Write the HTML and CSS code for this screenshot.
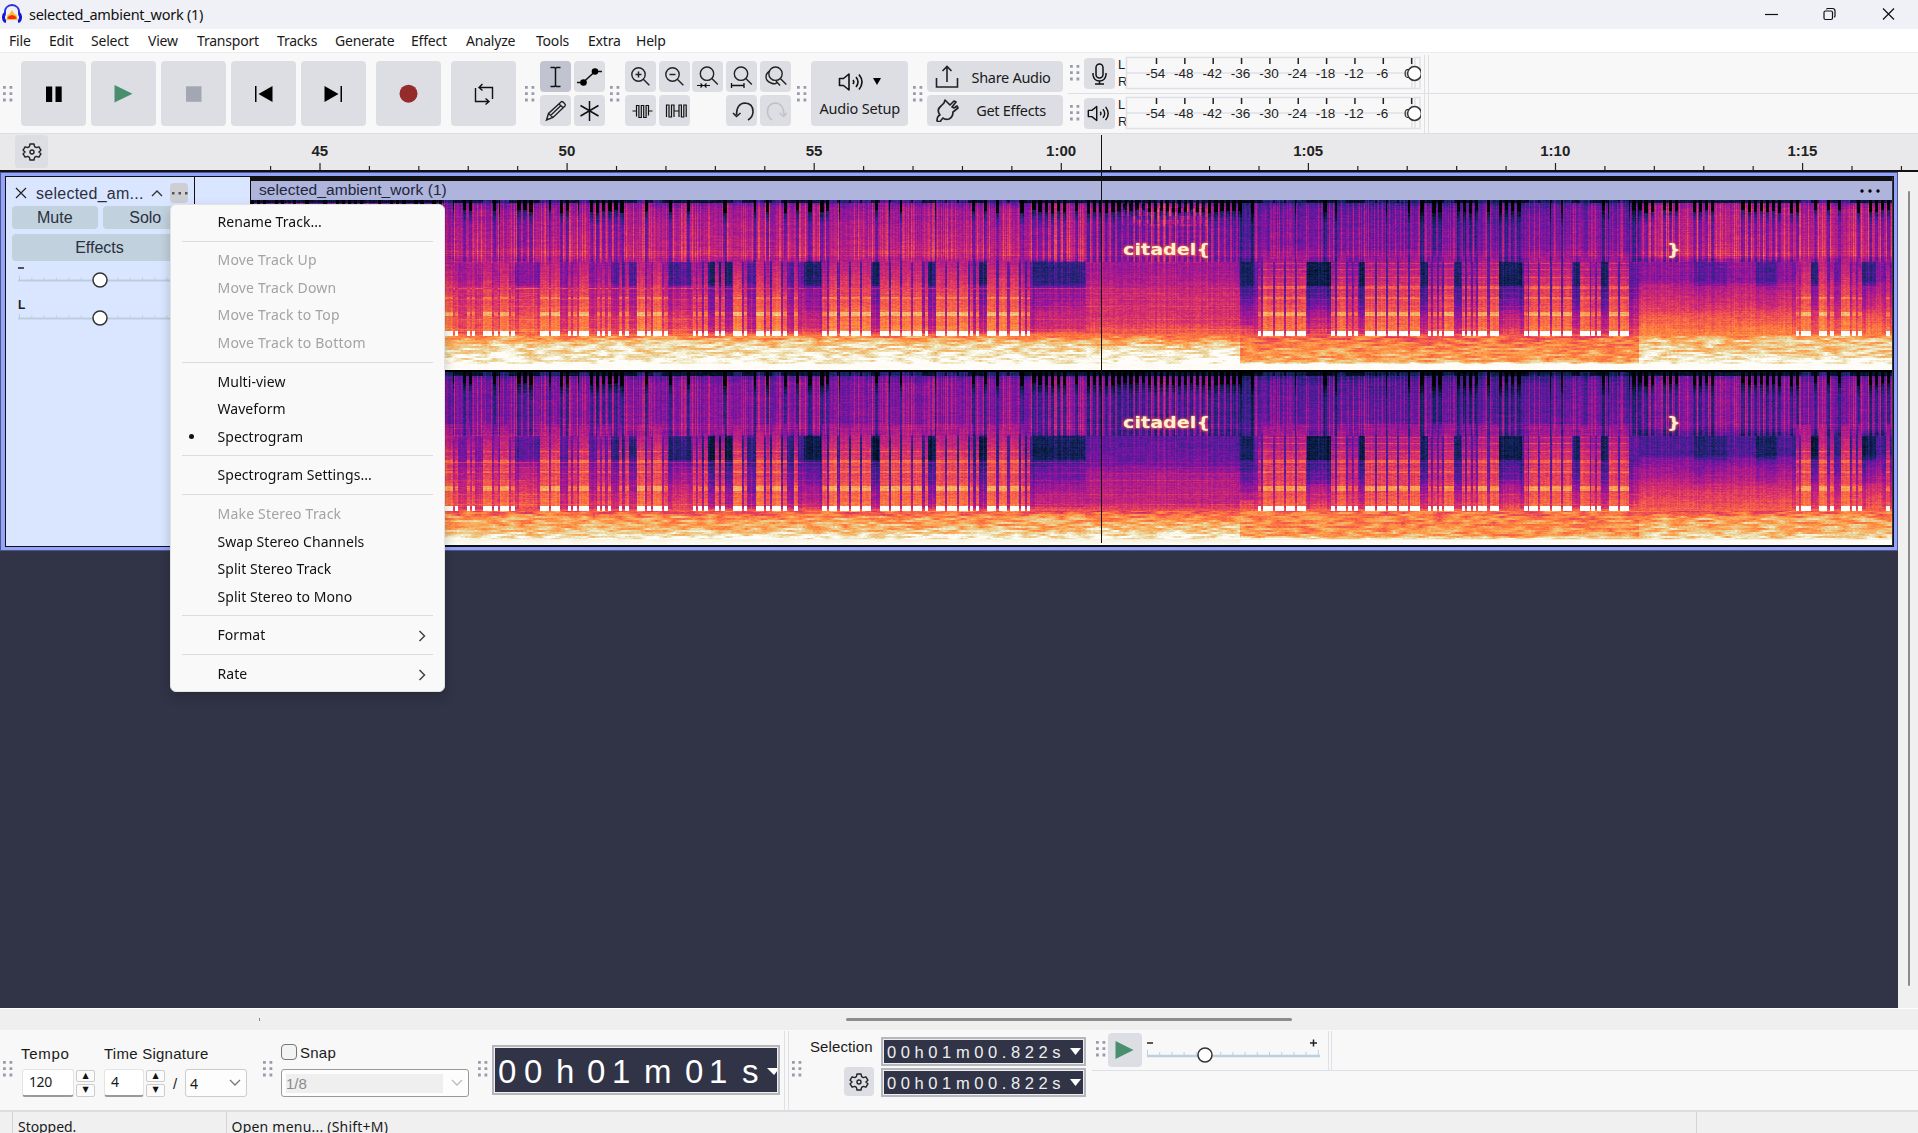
FILE: index.html
```
<!DOCTYPE html>
<html lang="en">
<head>
<meta charset="utf-8">
<title>selected_ambient_work (1)</title>
<link rel="stylesheet" href="styles.css">
</head>
<body>
<svg width="0" height="0" class="defs">
  <symbol id="grip" viewBox="0 0 10 16"><g fill="#9a9bad"><path d="M0 0h2.800v2.800H0zM6.500 0h2.800v2.800H6.500zM0 6.300h2.800v2.800H0zM6.500 6.300h2.800v2.800H6.500zM0 12.600h2.800v2.800H0zM6.500 12.600h2.800v2.800H6.500z"/></g></symbol>
  <symbol id="gear" viewBox="0 0 20 20"><g fill="none" stroke="#222" stroke-width="1.4" stroke-linejoin="round"><path d="M8 2h4l.6 2.6 1.7 1 2.6-.8 2 3.4-2 1.8 2 1.8-2 3.4-2.6-.8-1.7 1L12 18H8l-.6-2.6-1.7-1-2.6.8-2-3.4 2-1.8-2-1.8 2-3.4 2.6.8 1.7-1z"/><circle cx="10" cy="10" r="2"/></g></symbol>
  <symbol id="speaker" viewBox="0 0 26 20"><g fill="none" stroke="#111" stroke-width="1.6" stroke-linejoin="round"><path d="M1.5 6.5h4L11 2v16l-5.500-4.500h-4zM15 8q1.500 2 0 4M18 5q4 5 0 10M21 2.500q6 7.500 0 15"/></g></symbol>
  <symbol id="lens" viewBox="0 0 31 31"><g fill="none" stroke="#222" stroke-width="1.400"><circle cx="13.500" cy="13.500" r="6.700"/><path d="M18.300 18.300l6 6"/></g></symbol>
</svg>

<header class="titlebar">
  <svg class="logo" width="20" height="22" viewBox="0 0 20 22"><path d="M4.500 18l1-5 2-1 2.500-4 2.500 4 2 1 1 5z" fill="#fdbb30"/><path d="M5 16l2-2 3-1 3 1 2 2-2 1H7z" fill="#f22c10"/><path d="M3 12C1 0 19 0 17 12" fill="none" stroke="#2a30d8" stroke-width="1.800"/><path d="M3.500 11.500c-3 1-2.500 7.500.5 8M16.500 11.500c3 1 2.500 7.500-.5 8" fill="none" stroke="#1218d8" stroke-width="3"/></svg>
  <span class="title">selected_ambient_work (1)</span>
  <svg class="winctl" width="140" height="20" viewBox="0 0 140 20" fill="none" stroke="#111" stroke-width="1.200"><path d="M5 10.500h13"/><rect x="64" y="7" width="8.500" height="8.500" rx="1.500"/><path d="M66.500 5.500q0-1 1-1h5q2.500 0 2.500 2.500v5q0 1-1 1"/><path d="M123 4.500l11 11M134 4.500l-11 11"/></svg>
</header>

<nav class="menubar"><span>File</span><span>Edit</span><span>Select</span><span>View</span><span>Transport</span><span>Tracks</span><span>Generate</span><span>Effect</span><span>Analyze</span><span>Tools</span><span>Extra</span><span>Help</span></nav>

<section class="toolbar">
  <svg class="grip"><use href="#grip"/></svg>
  <div class="transport">
    <button><svg viewBox="0 0 65 65"><path d="M25 25.500h6.200v15.500H25zM34.500 25.500h6.200v15.500h-6.200z"/></svg></button>
    <button><svg viewBox="0 0 65 65"><path fill="#4a8f6d" d="M23.500 24v17.500l18-8.800z"/></svg></button>
    <button><svg viewBox="0 0 65 65"><path fill="#a3a7b1" d="M25 25.300h15.500v15.500H25z"/></svg></button>
    <button><svg viewBox="0 0 65 65"><path d="M24 25h1.500v16H24zM41.500 25v16L27.500 33z"/></svg></button>
    <button><svg viewBox="0 0 65 65"><path d="M23.500 25v16l14-8zM39.500 25H41v16h-1.500z"/></svg></button>
    <button class="gap"><svg viewBox="0 0 65 65"><circle cx="32.500" cy="32.700" r="9" fill="#952b2b"/></svg></button>
    <button class="gap"><svg viewBox="0 0 65 65" fill="none" stroke="#111" stroke-width="1.400"><path d="M24.500 27v13.500h13.500M41.500 38V26.500H28M31.500 23l-3.500 3.500 3.500 3M34.500 37.500l3.500 3-3.500 3"/></svg></button>
  </div>
  <svg class="grip"><use href="#grip"/></svg>
  <div class="tools two">
    <button class="on"><svg viewBox="0 0 31 31" fill="none" stroke="#111" stroke-width="1.500"><path d="M10.500 6.500h4l1 1 1-1h4M10.500 25.500h4l1-1 1 1h4M15.500 7v18"/></svg></button>
    <button><svg viewBox="0 0 31 31"><path d="M3 21.500h6L21 10.500h7" fill="none" stroke="#111" stroke-width="1.500"/><circle cx="9.500" cy="21.500" r="3.300"/><circle cx="21" cy="10.500" r="3.300"/></svg></button>
    <button><svg viewBox="0 0 31 31" fill="none" stroke="#222" stroke-width="1.400"><path d="M6.500 25l2-6.500L21 7q1-1 2.500.5l1 1q1.500 1.500.5 2.500L13 22.500zM8.500 18.500l4.500 4M19 9l4.500 4M10.500 20.500L20.500 11"/></svg></button>
    <button><svg viewBox="0 0 31 31" fill="none" stroke="#111" stroke-width="1.500"><path d="M15.500 6v20M6.500 10.500l18 10.500M24.500 10.500l-18 10.500"/></svg></button>
  </div>
  <svg class="grip"><use href="#grip"/></svg>
  <div class="tools five">
    <button><svg viewBox="0 0 31 31"><use href="#lens"/><path d="M10.500 13.500h6M13.500 10.500v6" stroke="#222" stroke-width="1.500"/></svg></button>
    <button><svg viewBox="0 0 31 31"><use href="#lens"/><path d="M10.500 13.500h6" stroke="#222" stroke-width="1.500"/></svg></button>
    <button><svg viewBox="0 0 31 31"><use href="#lens" x="1.500" y="-.8"/><path d="M5 24.500h13M8.500 22.500l2 2-2 2M14.500 22.500l-2 2 2 2" fill="none" stroke="#111" stroke-width="1.200"/></svg></button>
    <button><svg viewBox="0 0 31 31"><use href="#lens" x="1.500" y="-.8"/><path d="M5.500 24.500h12.500M5.500 22v5M18 22v5" fill="none" stroke="#111" stroke-width="1.300"/></svg></button>
    <button><svg viewBox="0 0 31 31"><use href="#lens" x="2" y="-.8"/><path d="M10 10q-4 2-4 6t5 6 6-1M16 20l4 4.500" fill="none" stroke="#222" stroke-width="1.400"/></svg></button>
    <button><svg viewBox="0 0 31 31" fill="none" stroke="#111" stroke-width="1.200"><path d="M7.500 16h4v5M23.500 11v5h4M11.500 21.500v-11h2.400v12h2.400v-12h2.400v12h2.400v-12h2.400v10"/></svg></button>
    <button><svg viewBox="0 0 31 31" fill="none" stroke="#111" stroke-width="1.200"><path d="M7.500 22V10h2.500v12h2.500V10h2.500v12M15 16h5M20 22V10h2.400v12h2.400V10h2.400v12"/></svg></button>
    <i></i>
    <button><svg viewBox="0 0 31 31" fill="none" stroke="#222" stroke-width="1.600"><path d="M22 25q5-3 5-8.500 0-8-8-8.500-8.500.5-8.500 12M7 18l3.500 3.500 4-3.500"/></svg></button>
    <button><svg viewBox="0 0 31 31" fill="none" stroke="#bfc3c8" stroke-width="1.600"><path d="M12 25q-4.500-3-4.500-8.500 0-8 8-8.500 8 .5 8.500 12M19.500 18l4 3.500 3.500-3.500"/></svg></button>
  </div>
  <svg class="grip"><use href="#grip"/></svg>
  <button class="setup"><span><svg width="26" height="20"><use href="#speaker"/></svg><svg width="8" height="7"><path d="M0 0h8L4 7z"/></svg></span><b>Audio Setup</b></button>
  <svg class="grip"><use href="#grip"/></svg>
  <div class="share">
    <button><svg width="24" height="24" viewBox="0 0 24 24" fill="none" stroke="#222" stroke-width="1.600"><path d="M1.500 13v9h21v-9M12 17V2M7.500 6L12 1.500 16.500 6"/></svg><b>Share Audio</b></button>
    <button><svg width="24" height="24" viewBox="0 0 24 24" fill="none" stroke="#222" stroke-width="1.700" stroke-linejoin="round"><path d="M2 23q0-5 3-6-4-5 1-9l3-3 1-3 3 3 2 2 4-4 2 1-4 5 2 1 3-2 1 2-5 4q0 5-4 7-4 1-6-1-2 2-3 4z"/></svg><b>Get Effects</b></button>
  </div>
  <div class="meters">
    <div class="meter"><svg class="grip"><use href="#grip"/></svg><button><svg viewBox="0 0 31 31" fill="none" stroke="#111" stroke-width="1.500"><rect x="12" y="6" width="7" height="14" rx="3.500"/><path d="M9 15v2q1 6 6.500 6t6.500-6v-2M15.500 23v3M11 26h9"/></svg></button><svg class="scale" width="303" height="36"></svg></div>
    <div class="meter"><svg class="grip"><use href="#grip"/></svg><button><svg viewBox="-3 -5.500 31 31"><use href="#speaker" width="23" height="20"/></svg></button><svg class="scale" width="303" height="36"></svg></div>
  </div>
</section>

<section class="ruler"><button><svg width="20" height="20"><use href="#gear"/></svg></button><svg class="timeline" width="1858" height="37"></svg></section>

<main class="workspace">
  <div class="canvas">
    <div class="track">
      <aside class="panel">
        <div class="name"><svg width="12" height="12" viewBox="0 0 12 12" stroke="#222" stroke-width="1.200"><path d="M1 1l10 10M11 1L1 11"/></svg><span>selected_am...</span><svg width="12" height="8" viewBox="0 0 12 8" fill="none" stroke="#333" stroke-width="1.400"><path d="M1 7l5-5 5 5"/></svg><em><svg width="16" height="3"><path d="M0 0h2.500v2.500H0zM6.500 0H9v2.500H6.500zM13 0h2.500v2.500H13z" fill="#555"/></svg></em></div>
        <div class="pair"><button>Mute</button><button>Solo</button></div>
        <button class="fx">Effects</button>
        <svg class="sliders" width="176" height="66"></svg>
      </aside>
      <div class="vruler"></div>
      <div class="clip">
        <div class="cliphead"><span>selected_ambient_work (1)</span><svg width="20" height="4"><circle cx="2" cy="2" r="1.700"/><circle cx="10" cy="2" r="1.700"/><circle cx="18" cy="2" r="1.700"/></svg></div>
        <div class="spectro">
          <canvas width="1642" height="345"></canvas>
          <span class="mark word top">citadel{</span><span class="mark word low">citadel{</span>
          <span class="mark brace top">}</span><span class="mark brace low">}</span>
        </div>
      </div>
    </div>
  </div>
  <div class="vscroll"><i></i></div>
  <div class="playhead"></div>
  <ul class="popup">
    <li>Rename Track...</li><li class="sep"></li>
    <li class="off">Move Track Up</li><li class="off">Move Track Down</li><li class="off">Move Track to Top</li><li class="off">Move Track to Bottom</li><li class="sep"></li>
    <li>Multi-view</li><li>Waveform</li><li class="dot">Spectrogram</li><li class="sep"></li>
    <li>Spectrogram Settings...</li><li class="sep"></li>
    <li class="off">Make Stereo Track</li><li>Swap Stereo Channels</li><li>Split Stereo Track</li><li>Split Stereo to Mono</li><li class="sep"></li>
    <li>Format<svg width="8" height="12" viewBox="0 0 8 12"><path d="M1.500 1L6.500 6l-5 5"/></svg></li><li class="sep"></li>
    <li>Rate<svg width="8" height="12" viewBox="0 0 8 12"><path d="M1.500 1L6.500 6l-5 5"/></svg></li>
  </ul>
</main>

<div class="hscroll"><i class="speck"></i><i class="thumb"></i></div>

<footer class="bottom">
  <svg class="grip"><use href="#grip"/></svg>
  <div class="group tempo"><label>Tempo</label><div class="row"><span class="field w52">120</span><span class="spin"><i>▲</i><i>▼</i></span></div></div>
  <div class="group sig"><label>Time Signature</label><div class="row"><span class="field w40">4</span><span class="spin"><i>▲</i><i>▼</i></span><span class="slash">/</span><span class="select">4<svg width="12" height="8" viewBox="0 0 12 8"><path d="M1 1l5 5 5-5"/></svg></span></div></div>
  <svg class="grip g3"><use href="#grip"/></svg>
  <div class="group snap"><label><i></i>Snap</label><span class="select dis"><span>1/8</span><svg width="12" height="8" viewBox="0 0 12 8"><path d="M1 1l5 5 5-5"/></svg></span></div>
  <svg class="grip g4"><use href="#grip"/></svg>
  <div class="bigtime"><svg width="282" height="45"><g font-family="Liberation Sans, sans-serif" font-size="33" fill="#fff"><text x="2" y="36">0</text><text x="28" y="36">0</text><text x="60" y="36">h</text><text x="91" y="36">0</text><text x="116" y="36">1</text><text x="148" y="36">m</text><text x="189" y="36">0</text><text x="213" y="36">1</text><text x="246" y="36">s</text></g><path d="M271 21h11v2l-4 5z" fill="#fff"/></svg></div>
  <div class="vline"></div>
  <svg class="grip g5"><use href="#grip"/></svg>
  <div class="selection"><div class="sel-left"><span>Selection</span><button><svg width="20" height="20"><use href="#gear"/></svg></button></div>
    <div class="times"><div class="smalltime"><span>00h01m00.822s</span><svg width="11" height="7"><path d="M0 0h11L5.500 7z" fill="#fff"/></svg></div><div class="smalltime"><span>00h01m00.822s</span><svg width="11" height="7"><path d="M0 0h11L5.500 7z" fill="#fff"/></svg></div></div></div>
  <div class="speedbar"><div class="speed">
    <svg class="grip"><use href="#grip"/></svg>
    <button><svg viewBox="0 0 34 34"><path d="M7.500 8v18l18-9z" fill="#4a8f6d"/></svg></button>
    <svg class="speed-slider" width="185" height="38"></svg>
    <div class="vline short"></div>
  </div></div>
</footer>
<div class="status"><span>Stopped.</span><span>Open menu... (Shift+M)</span><span></span></div>
<script src="script.js"></script>
</body>
</html>
```
FILE: styles.css
```
* { box-sizing: border-box; }
body { margin: 0; width: 1918px; height: 1133px; overflow: hidden; display: flex; flex-direction: column; background: #f0f0f0; font-family: "Noto Sans", "Open Sans", sans-serif; color: #1a1a1a; }
button { border: 0; padding: 0; margin: 0; background: #dddee4; border-radius: 4px; color: inherit; font: inherit; display: block; }
button svg { display: block; }
b { font-weight: 400; }
.defs { position: absolute; }
.titlebar { height: 29px; flex: none; background: #f0f1f7; display: flex; align-items: center; padding: 0 24px 0 2px; }
.logo { margin-top: -4px; }
.title { margin-left: 7px; margin-top: -1px; font-size: 14.500px; letter-spacing: -.260px; color: #111; }
.winctl { margin-left: auto; margin-right: -6px; margin-top: -1px; }
.menubar { height: 23px; flex: none; background: #fff; display: grid; grid-template-columns: 40px 42px 57px 49px 80px 58px 76px 55px 70px 52px 48px 60px; padding-left: 9px; line-height: 24px; font-size: 14px; letter-spacing: -.200px; }
.toolbar { height: 82px; flex: none; background: #f8f8f9; border-top: 1px solid #ececef; border-bottom: 1px solid #dddde5; display: flex; align-items: center; padding: 1px 0 0 3px; }
.grip { width: 10px; height: 16px; flex: none; }
.transport { display: flex; gap: 5px; margin: 0 9px 0 8px; }
.transport button { width: 65px; height: 65px; }
.transport .gap { margin-left: 5px; }
.tools { display: grid; gap: 2.600px; margin: 0 5px; }
.tools button, .meter button { width: 31px; height: 31px; }
.two { grid-template-columns: 31px 31px; }
.two .on { background: #c1c3d0; }
.five { grid-template-columns: repeat(5, 31px); gap: 2.700px; margin: 0 6px 0 5.500px; }
.setup { width: 97px; height: 65px; margin: 0 4.500px; display: flex; flex-direction: column; justify-content: center; align-items: center; font-size: 14.500px; letter-spacing: -.2px; gap: 6px; padding-top: 2px; line-height: 20px; }
.setup span { display: flex; gap: 9px; align-items: center; }
.setup b { white-space: nowrap; }
.share { display: flex; flex-direction: column; gap: 2.700px; margin-left: 4.500px; }
.share button { width: 136px; height: 31px; display: flex; align-items: center; padding-left: 8px; font-size: 14.500px; letter-spacing: -.3px; }
.share svg { flex: none; }
.share b { flex: 1; text-align: center; }
.meters { width: 853px; height: 80px; margin: -1px 0 0 4.500px; background: linear-gradient(#dfdfe6, #dfdfe6) 356px 2px / 1px 78px no-repeat, linear-gradient(#dfdfe6, #dfdfe6) 360px 2px / 1px 78px no-repeat; }
.meter { height: 41px; display: flex; align-items: center; border-bottom: 1px solid #dfdfe6; padding: 0 0 0 2px; }
.meter + .meter { border-bottom: 0; height: 38px; }
.meter button { margin: 0 2.500px 0 4.500px; }
.scale { display: block; }
.ruler { height: 38px; flex: none; background: #e9e9eb; border-bottom: 2px solid #111; display: flex; padding-left: 15px; }
.ruler button { width: 33px; height: 33px; margin-top: 1px; display: flex; align-items: center; justify-content: center; }
.ruler .timeline { margin-left: 11px; display: block; margin-top: -1px; }
.workspace { height: 836px; flex: none; display: flex; position: relative; }
.canvas { width: 1898px; background: #313447; }
.track { height: 379px; border: solid #95a4fb; border-width: 4px 4px 4px 5px; display: flex; box-shadow: inset 0 0 0 1px #111; padding: 1px; outline: 1px solid #4d558c; outline-offset: -1px; }
.panel { width: 188px; background: #dae6ff; padding: 6px 6px; display: flex; flex-direction: column; font: 16px "Liberation Sans", sans-serif; color: #2a3040; }
.name { display: flex; align-items: center; height: 20px; padding-left: 3px; }
.name span { margin: 1px 0 0 9px; width: 108px; letter-spacing: .260px; }
.name svg { flex: none; }
.name > svg + span + svg { margin-left: 7px; }
.name em { background: #cdcfd4; border-radius: 4px; width: 20px; height: 20px; margin-left: 7px; display: flex; align-items: center; padding-left: 2px; }
.pair { display: flex; gap: 5px; margin-top: 3px; }
.panel button { background: #c2d1de; height: 23px; width: 86px; }
.panel .fx { width: 177px; height: 27px; margin-top: 5px; padding-right: 2px; }
.sliders { margin-left: -1px; margin-top: -1px; }
.vruler { width: 57px; background: #dae6ff; border-left: 1px solid #111; border-right: 1px solid #111; }
.clip { width: 1641px; background: #111; padding-top: 4px; overflow: hidden; }
.cliphead { height: 19px; background: #aeb4db; color: #22263a; font: 15.500px/18px "Liberation Sans", sans-serif; display: flex; justify-content: space-between; align-items: center; padding: 0 12px 0 8px; }
.cliphead span { letter-spacing: .070px; margin-top: -1px; }
.spectro { position: relative; height: 345px; margin-left: -1px; }
.spectro canvas { display: block; }
.mark { position: absolute; font: bold 16px/18px "DejaVu Sans", sans-serif; color: #fff1cf; text-shadow: 0 0 2px #f98b45, 0 0 3px #e0504f; transform-origin: 0 50%; }
.word { left: 873px; transform: scale(1.200, .950); }
.brace { left: 1417px; transform: scale(1.200, 1); }
.top { top: 41px; }
.low { top: 214px; }
.vscroll { width: 20px; background: #f0f0f0; padding: 19px 0 0 10px; }
.vscroll i { display: block; width: 2px; height: 795px; background: #8b8b8b; border-radius: 2px; }
.playhead { position: absolute; left: 1101px; top: -37px; width: 1px; height: 408px; background: #111; }
.popup { position: absolute; left: 170px; top: 32px; width: 275px; height: 488px; margin: 0; padding: 3px 11px; list-style: none; background: #f9f9f9; border-radius: 6px; border: 1px solid #e2e2e2; box-shadow: 0 5px 12px rgba(0,0,0,.2); font-size: 14px; letter-spacing: .050px; }
.popup li { height: 27.500px; line-height: 26px; padding: 0 7px 0 35.500px; display: flex; align-items: center; justify-content: space-between; color: #111; }
.popup .off { color: #a3a3a3; letter-spacing: .200px; }
.popup .sep { height: 11.200px; padding: 0; }
.popup .sep::after { content: ""; height: 1px; flex: 1; background: #dcdcdc; }
.popup svg { fill: none; stroke: #444; stroke-width: 1.500; margin-top: 2px; }
.popup .dot { justify-content: flex-start; padding-left: 7px; }
.popup .dot::before { content: ""; width: 5px; height: 5px; border-radius: 50%; background: #111; margin-right: 23.500px; }
.hscroll { height: 22px; flex: none; background: #efefef; border-top: 1px solid #fff; display: flex; align-items: center; }
.speck { width: 1px; height: 3px; background: #888; margin-left: 259px; }
.thumb { width: 446px; height: 3px; background: #8c8c8c; border-radius: 2px; margin-left: 586px; }
.bottom { height: 82px; flex: none; background: #f8f8f8; border-bottom: 2px solid #dcdde2; display: flex; padding-left: 3px; font: 15px "Liberation Sans", sans-serif; }
.bottom > .grip { margin-top: 31px; }
.group { padding-top: 14px; }
.group label { display: flex; height: 20px; align-items: center; white-space: nowrap; margin: -1px 0 6px; letter-spacing: .250px; }
.tempo { margin-left: 8px; width: 83px; }
.tempo label { letter-spacing: .700px; }
.tempo .row { padding-left: 1px; }
.sig { width: 143px; }
.g3 { margin-left: 16px; }
.snap { margin-left: 8px; width: 188px; }
.snap label { margin-top: -2px; margin-bottom: 7px; }
.snap label i { width: 16px; height: 16px; border: 1px solid #777; border-radius: 4px; background: #f3f3f3; margin: -1px 3px 0 0; }
.row { display: flex; align-items: center; height: 28px; }
.field { height: 28px; background: #fff; border: 1px solid #e4e4e4; border-bottom: 2px solid #999; border-radius: 3px; padding-left: 6px; line-height: 24px; font-family: "Noto Sans", sans-serif; font-size: 14px; letter-spacing: -.4px; }
.w52 { width: 52px; }
.w40 { width: 40px; }
.spin { width: 19px; margin-left: 2px; display: flex; flex-direction: column; gap: 2px; }
.spin i { height: 12.500px; border: 1px solid #ccc; border-radius: 2px; background: #fbfbfb; font: 8px/10px "DejaVu Sans", sans-serif; text-align: center; color: #111; }
.slash { margin: 0 7px 0 8px; width: 5px; }
.select { width: 62px; height: 28px; border: 1px solid #ccc; border-radius: 3px; background: #fdfdfd; display: flex; align-items: center; justify-content: space-between; padding: 0 5px 0 4px; font-family: "Noto Sans", sans-serif; font-size: 14px; }
.select svg { fill: none; stroke: #777; stroke-width: 1.300; }
.dis { width: 188px; border-color: #999; color: #8a8a8a; font-family: "Liberation Sans", sans-serif; font-size: 15px; }
.dis svg { stroke: #bbb; }
.dis span { background: #efefef; width: 157px; height: 19px; line-height: 19px; }
.g4 { margin-left: 9px; }
.bigtime { margin: 15px 0 0 4px; width: 288px; height: 50px; background: #313447; border: 2px solid #b6b7bd; outline: 1px solid #eee; outline-offset: -3px; }
.bigtime svg { display: block; margin-left: 2px; }
.vline { width: 5px; margin-left: 4px; margin-top: 1px; border: solid #e0e0e6; border-width: 0 1px; flex: none; }
.g5 { margin-left: 3px; }
.selection { display: flex; margin-left: 8px; }
.sel-left { width: 71px; padding-top: 8px; display: flex; flex-direction: column; font-size: 15px; letter-spacing: .100px; }
.sel-left button { width: 30px; height: 29px; margin: 12px 0 0 34px; display: flex; align-items: center; justify-content: center; }
.times { padding-top: 7px; display: flex; flex-direction: column; gap: 2px; }
.smalltime { width: 205px; height: 29px; background: #313447; border: 2px solid #b6b7bd; outline: 1px solid #eee; outline-offset: -3px; color: #eee; display: flex; align-items: center; justify-content: space-between; padding: 1px 3px 0 4px; font-size: 16.500px; }
.smalltime svg { flex: none; margin-top: -2px; }
.smalltime span { letter-spacing: 4.600px; white-space: nowrap; width: 180px; }
.speedbar { margin-left: 6px; flex: 1; }
.speed { height: 41px; border-bottom: 1px solid #dfdfe6; display: flex; padding-left: 4px; }
.speed .grip { margin-top: 11px; }
.speed button { width: 34px; height: 34px; margin: 3px 0 0 2px; }
.speed-slider { margin-left: -1px; }
.short { width: 4px; margin-left: 2px; }
.status { height: 21px; flex: none; display: flex; font-size: 14px; line-height: 29px; padding-left: 12px; letter-spacing: .220px; }
.status span { border-left: 1px solid #d4d4d4; padding-left: 5px; width: 213.500px; height: 29px; }
.status span:nth-child(2) { width: 1470.500px; }
.status span:nth-child(1) { letter-spacing: -.05px; }
```
FILE: script.js
```
// Meter scales
document.querySelectorAll('.scale').forEach(function (svg) {
  var line = function (d) { return '<path d="' + d + '" fill="none" stroke="#dfdfe6" stroke-width="1.5"/>'; };
  var s = '<g font-family="Liberation Sans, sans-serif" fill="#222"><text x="0" y="14" font-size="13">L</text><text x="0" y="31" font-size="13">R</text>';
  s += line('M8.500 2.500h293.500v31h-293.500zM8 18h294M294 2v32M297 2v32');
  [-54, -48, -42, -36, -30, -24, -18, -12, -6, 0].forEach(function (v, i) {
    var x = 38.500 + i * 28.350;
    s += '<path d="M' + x + ' 3v6" stroke="#222" stroke-width="1.500"/>';
    s += '<text x="' + (v ? x - 1 : x - 4) + '" y="22.500" font-size="13.500" text-anchor="middle">' + v + '</text>';
  });
  svg.innerHTML = s + '<circle cx="296.500" cy="18.500" r="6.900" fill="#fff" stroke="#333" stroke-width="1.500"/></g>';
});

// Timeline ruler, 49.42 px per second
(function () {
  var s = '<g font-family="Liberation Sans, sans-serif" font-weight="bold" font-size="15" fill="#222" text-anchor="middle">';
  var names = { 45: '45', 50: '50', 55: '55', 60: '1:00', 65: '1:05', 70: '1:10', 75: '1:15' };
  for (var t = 44; t < 78; t++) {
    var x = 261 + (t - 45) * 49.420;
    s += '<path d="M' + x + ' ' + (names[t] ? 30 : 33) + 'V38" stroke="#222" stroke-width="1.200"/>';
    if (names[t]) s += '<text x="' + (x - .200) + '" y="23">' + names[t] + '</text>';
  }
  document.querySelector('.timeline').innerHTML = s + '</g>';
})();

// Sliders
(function () {
  var s = '', y, i;
  [[20.500, ''], [58.500, 'L']].forEach(function (r) {
    y = r[0];
    for (i = 0; i < 15; i++) s += '<path d="M' + (8.500 + i * 12.300) + ' ' + (y - (i ? 3 : 5)) + 'V' + y + '" stroke="#c0cede"/>';
    s += '<path d="M7 ' + y + 'h164" stroke="#bccddd" stroke-width="2"/><circle cx="89" cy="' + (y - .500) + '" r="7" fill="#fff" stroke="#333" stroke-width="1.500"/>';
    s += '<text x="7" y="' + (y - 9.500) + '" font-family="Liberation Sans, sans-serif" font-size="12" font-weight="bold" fill="#222">' + r[1] + '</text>';
  });
  document.querySelector('.sliders').innerHTML = s + '<path d="M7 8h6" stroke="#222" stroke-width="1.500"/>';
  s = '';
  for (i = 0; i < 15; i++) s += '<path d="M' + (6.500 + i * 12.200) + ' ' + (i % 14 ? 22 : 20) + 'V26" stroke="#bdd0e2"/>';
  s += '<path d="M6 26h173" stroke="#bdd0e2" stroke-width="2.500"/><circle cx="64" cy="25" r="7" fill="#fff" stroke="#333" stroke-width="1.500"/>';
  s += '<path d="M6 13h6M169 13h7M172.500 9.500v7" stroke="#222" stroke-width="1.500"/>';
  document.querySelector('.speed-slider').innerHTML = s;
})();

// Spectrogram of both channels
(function () {
  var X0 = 251, W = 1642, H = 345;
  var notes = [];
  function add(scale, off, list) {
    list.split(' ').forEach(function (p) { var a = p.split('-'); notes.push([a[0] / scale + off, a[1] / scale + off]); });
  }
  add(2.450, 440, '12-33 38-47 67-75 80-88 108-130 134-145 150-171 177-186 248-268 274-296 315-324 328-337 343-366 386-394 399-407 413-420 441-449 455-464 485-505 510-518 524-545 550-560 621-630 635-643 648-658 676-685 691-699 719-741 746-754 775-795 800-810 815-838 843-852 870-879 939-949 954-974 982-1003 1010-1031 1037-1058 1079-1101 1106-1128 1134-1156 1162-1184 1190-1198 1218-1240 1245-1268 1274-1295 1300-1309 1315-1323 1343-1365 1371-1391 1399-1420 1425-1434 1439-1448');
  add(3, 1060, '596-606 612-640 646-674 680-706 712-741 816-827 832-860 866-877 884-895 918-946 952-980 986-1012 1018-1046 1052-1082 1106-1116 1121-1132 1139-1148 1154-1184 1207-1217 1223-1234 1240-1250 1257-1284 1291-1318 1395-1405 1410-1436');
  add(3, 1540, '3-33 38-66 72-99 123-152 156-168 174-186 209-235 243-270 769-780 785-814 838-864 871-883 906-932 939-950 956-967 1040-1052');
  var patches = [[515, 542, .07], [612, 637, .08], [670, 692, .12], [709, 733, .12], [805, 822, .13], [873, 880, .12], [926, 936, .12], [980, 990, .1], [1034, 1086, .1], [1240, 1255, .08], [1308, 1332, .18], [1360, 1366, .15], [1422, 1429, .12], [1454, 1462, .1], [1500, 1523, .16], [1574, 1581, .12], [1602, 1609, .12], [1695, 1728, .07], [1757, 1778, .1], [1812, 1819, .12], [1863, 1877, .12]];
  var curves = {
    A: [[[0, .32], [10, .41], [50, .48], [56, .47], [64, .39], [82, .4], [90, .49], [110, .54], [128, .6], [135, .7], [141, .85], [150, .91], [160, .97], [163, 1], [170, 1]],
        [[0, .28], [10, .36], [40, .37], [58, .38], [66, .33], [84, .33], [95, .43], [110, .48], [130, .57], [138, .67], [142, .76], [155, .84], [164, .97], [170, 1]]],
    B: [[[0, .3], [10, .42], [55, .45], [70, .43], [95, .52], [120, .56], [132, .64], [140, .79], [150, .94], [160, .99], [170, 1]],
        [[0, .3], [10, .37], [55, .36], [65, .33], [90, .36], [100, .45], [128, .51], [140, .69], [150, .83], [163, .95], [170, 1]]],
    C: [[[0, .25], [10, .33], [55, .38], [60, .35], [85, .35], [110, .47], [128, .57], [138, .68], [150, .76], [161, .8], [164, 1], [170, 1]],
        [[0, .22], [10, .3], [55, .34], [85, .34], [105, .43], [128, .58], [138, .7], [160, .77], [165, 1], [170, 1]]],
    D: [[[0, .35], [10, .44], [55, .49], [59, .4], [80, .39], [84, .46], [105, .56], [120, .65], [134, .72], [139, .84], [155, .9], [163, 1], [170, 1]],
        [[0, .28], [10, .36], [50, .37], [60, .3], [80, .3], [84, .37], [100, .45], [115, .55], [138, .67], [143, .78], [162, .87], [165, 1], [170, 1]]]
  };
  var stops = [[0, 0, 0, 0], [.1, 3, 16, 34], [.2, 16, 36, 90], [.29, 62, 32, 146], [.37, 120, 20, 162], [.46, 172, 26, 140], [.55, 214, 46, 108], [.64, 243, 88, 76], [.72, 254, 130, 62], [.8, 249, 170, 88], [.88, 234, 210, 150], [.94, 242, 236, 205], [1, 255, 253, 249]];
  function lerp(table, t) {
    for (var i = 1; i < table.length - 1 && t > table[i][0];) i++;
    var a = table[i - 1], b = table[i], f = Math.max(0, Math.min(1, (t - a[0]) / (b[0] - a[0])));
    return a.slice(1).map(function (v, k) { return v + (b[k + 1] - v) * f; });
  }
  var palette = [];
  for (var i = 0; i <= 500; i++) palette.push(lerp(stops, i / 500));
  function rnd(x, y) {
    var n = (Math.imul(x | 0, 374761393) + Math.imul(y | 0, 668265263)) | 0;
    n = Math.imul(n ^ (n >>> 13), 1274126177);
    return ((n ^ (n >>> 16)) >>> 0) / 4294967296 - .5;
  }
  function smooth(x, y) {
    var i = Math.floor(x), f = x - i;
    return rnd(i, y) * (1 - f) + rnd(i + 1, y) * f;
  }
  function region(x) { return x < 1087 ? 'A' : x < 1241 ? 'B' : x < 1640 ? 'C' : 'D'; }
  var cv = document.querySelector('.spectro canvas'), ctx = cv.getContext('2d'), img = ctx.createImageData(W, H);
  var tables = {};
  Object.keys(curves).forEach(function (k) {
    tables[k] = curves[k].map(function (c) { var o = []; for (var t = 0; t < 176; t++) o.push(lerp(c, t)[0]); return o; });
  });
  for (var px = 0; px < W; px++) {
    var x = px + X0, r = region(x), hit = 0, wide = 0, dark = 0, near = 0;
    notes.forEach(function (n) {
      if (x >= n[0] - .3 && x < n[1] - .3) { hit = 1; wide = n[1] - n[0] > 6; }
      if (x >= n[0] - 4 && x < n[1] + 4) near = 1;
    });
    patches.forEach(function (p) { if (x >= p[0] && x < p[1]) dark = p[2]; });
    var phase = (x % 6.060) / 6.060, slot = Math.floor(x / 6.060);
    var gap = phase > .450 && (rnd(slot, 5) > -.12 || r === 'B') && !(hit && wide);
    var col = rnd(x, 77), spike = !gap && rnd(x, 19) > .25;
    var tick = 10 + Math.floor((rnd(slot, 8) + .5) * 4);
    for (var py = 0; py < H; py++) {
      var ch = py < 170 ? 0 : 1, t = ch ? (py - 172) * 170 / 173 : py, v;
      if (py === 170 || py === 171) v = 0;
      else {
        t = Math.max(0, t);
        var ti = Math.floor(t);
        v = tables[r][ch][ti];
        if (r === 'A' && ti > 60 && ti < 132) v += x < 560 ? .07 : x < 700 ? .02 : -.05;
        if (ti < 62) {
          v += (gap ? -.09 : .02) + col * .08 + (spike ? .1 : 0);
          if (gap) v = ti < tick ? .02 : v - Math.max(0, .13 - (ti - tick) * .011);
          if (ti < 3) v = v * (hit && wide ? .75 : .35);
          if (hit && wide) v -= .01;
        } else if (ti < 134) {
          v += col * .05 + (spike ? .06 : 0) * (1 - (ti - 62) / 80);
          if (dark && !hit) v -= dark * (ti < 86 ? 1 : ti < 110 ? .4 : .1);
          if (near && !hit) v -= ti < 90 ? .03 : .06;
        }
        if (ti > 50 && ti < 57 && ti % 2 === 1) v += .05;
        if (!hit && (ti === 88 || ti === 93 || ti === 99 || ti === 106 || ti === 119 || ti === 129) && r !== 'D') v += ti === 88 && r === 'A' ? .13 : .05;
        if (hit && ti > 50 && ti < 137) {
          var hv = .48 + (Math.min(ti, 95) - 60) * .0040 + Math.max(0, ti - 95) * .0032;
          if (r === 'C') hv -= .03;
          if (ch && ti > 95) hv -= .03;
          if (!wide) hv -= .06;
          if (ti > 111 && ti < 116) hv += wide ? .15 : .1;
          if (ti > 96 && ti < 99) hv += .1;
          if (r === 'C' || ch) if ((ti > 85 && ti < 89) || ti === 77 || (r === 'C' && (ti === 69 || ti === 63))) hv += .1;
          v = Math.max(v, hv + col * .05);
          if (ti >= 131 && ti <= 135) v = 1.050;
        }
        if (ti < 136) {
          v += rnd(x >> 1, py + ch * 400) * .07 + rnd(Math.floor(x / 31), py + 900) * .04;
        } else {
          var amp = ti > 163 ? .02 : .22;
          v += smooth(x / 9, (py >> 1) + 50) * amp + rnd(x >> 1, py) * amp * .3;
        }
        if (r === 'B' && !ch && ti < 26 && x > 1122 && x < 1208) v += .04 + rnd(x >> 1, py >> 2) * .14;
        if (x > 1240 && x < 1254 && ti < 125) v -= .06;
      }
      var c = palette[Math.max(0, Math.min(500, Math.round(v * 500)))], o = (py * W + px) * 4;
      img.data[o] = c[0]; img.data[o + 1] = c[1]; img.data[o + 2] = c[2]; img.data[o + 3] = 255;
    }
  }
  ctx.putImageData(img, 0, 0);
})();
```
